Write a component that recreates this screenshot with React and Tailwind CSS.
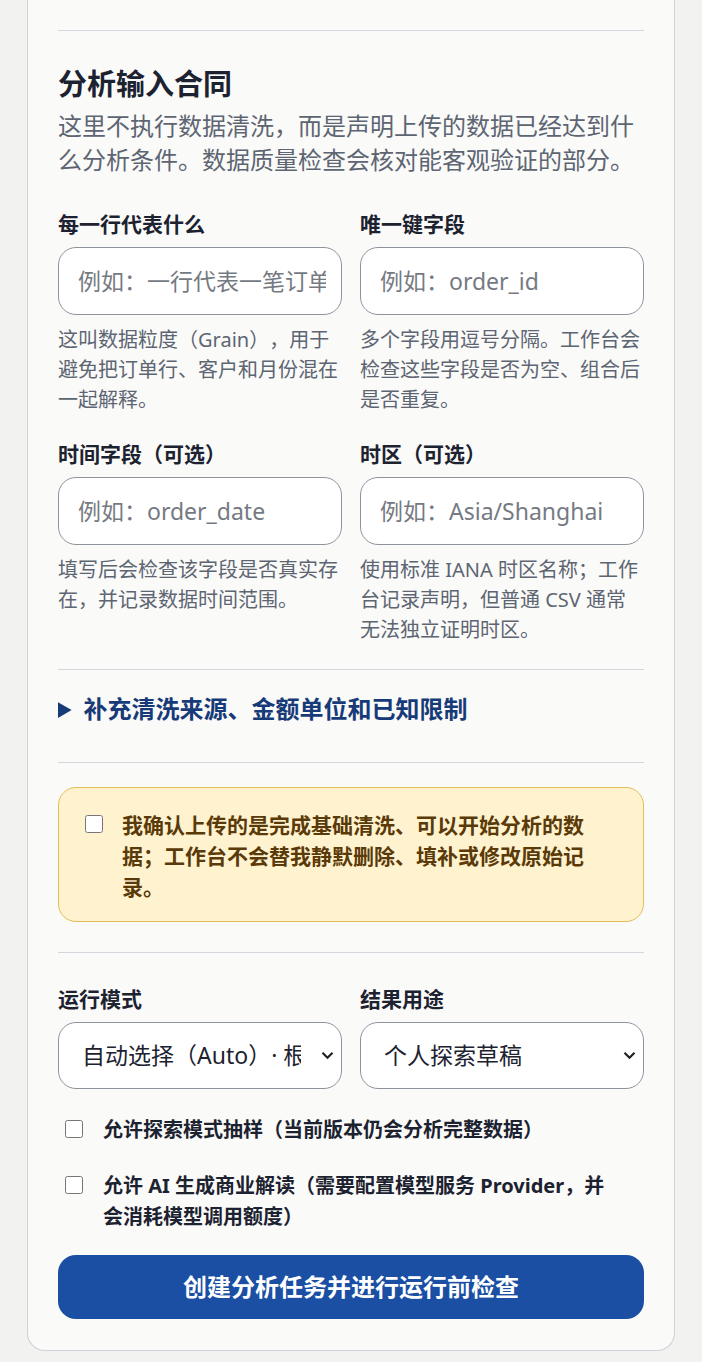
import React, { useState } from "react";

const font = { fontFamily: '"Noto Sans", "Noto Sans CJK SC", sans-serif' };

function Field({ label, placeholder, help }) {
  return (
    <div className="flex flex-col">
      <label className="text-[21px] font-bold leading-[28px] text-[#1c2230]">{label}</label>
      <input
        placeholder={placeholder}
        className="mt-[9px] h-[68px] w-full rounded-[18px] border border-[#8d939c] bg-white pl-[19px] pr-[15px] text-[23px] text-[#1c2230] placeholder:text-[#757a82] outline-none"
      />
      <p className="mt-[10px] text-[20px] leading-[30px] text-[#5d6573]">{help}</p>
    </div>
  );
}

function Select({ label, options }) {
  return (
    <div className="flex flex-col">
      <label className="text-[21px] font-bold leading-[28px] text-[#1c2230]">{label}</label>
      <div className="relative mt-[9px]">
        <select className="h-[67px] w-full appearance-none rounded-[18px] border border-[#8d939c] bg-white pl-[23px] pr-[40px] text-[23px] text-[#1c2230] outline-none">
          {options.map((o) => (
            <option key={o}>{o}</option>
          ))}
        </select>
        <svg
          className="pointer-events-none absolute right-[8px] top-[29px]"
          width="13"
          height="9"
          viewBox="0 0 13 9"
          fill="none"
        >
          <path d="M1.5 1.8 6.5 6.8 11.5 1.8" stroke="#1f2328" strokeWidth="2.2" />
        </svg>
      </div>
    </div>
  );
}

export default function App() {
  const [confirmed, setConfirmed] = useState(false);
  const [sampling, setSampling] = useState(false);
  const [ai, setAi] = useState(false);

  return (
    <div className="min-h-screen bg-[#f2f2f0] pb-[11px] [text-spacing-trim:space-all]" style={font}>
      <div className="mx-[27px] rounded-b-[18px] border-x border-b border-[#cfd2d7] bg-[#fafaf8] px-[30px] pb-[31px] pt-[30px]">
        <hr className="border-[#d3d6db]" />

        {/* Analysis input contract */}
        <h2 className="mt-[33px] text-[29px] font-bold leading-[40px] text-[#1c2230]">分析输入合同</h2>
        <p className="mt-[5px] text-[24px] leading-[34px] text-[#5d6573]">
          这里不执行数据清洗，而是声明上传的数据已经达到什么分析条件。数据质量检查会核对能客观验证的部分。
        </p>

        <div className="mt-[33px] grid grid-cols-2 gap-x-[18px] gap-y-[25px]">
          <Field
            label="每一行代表什么"
            placeholder="例如：一行代表一笔订单"
            help="这叫数据粒度（Grain），用于避免把订单行、客户和月份混在一起解释。"
          />
          <Field
            label="唯一键字段"
            placeholder="例如：order_id"
            help="多个字段用逗号分隔。工作台会检查这些字段是否为空、组合后是否重复。"
          />
          <Field
            label="时间字段（可选）"
            placeholder="例如：order_date"
            help="填写后会检查该字段是否真实存在，并记录数据时间范围。"
          />
          <Field
            label="时区（可选）"
            placeholder="例如：Asia/Shanghai"
            help="使用标准 IANA 时区名称；工作台记录声明，但普通 CSV 通常无法独立证明时区。"
          />
        </div>

        <hr className="mt-[24px] border-[#d3d6db]" />

        <details className="py-[22px]">
          <summary className="cursor-pointer text-[24px] font-bold leading-[34px] text-[#173a78]">
            补充清洗来源、金额单位和已知限制
          </summary>
        </details>

        <hr className="mt-[14px] border-[#d3d6db]" />

        {/* Confirmation */}
        <label className="mt-[24px] flex gap-[19px] rounded-[18px] border border-[#e3bd55] bg-[#fff2cf] pb-[18px] pl-[26px] pr-[40px] pt-[22px]">
          <input
            type="checkbox"
            checked={confirmed}
            onChange={(e) => setConfirmed(e.target.checked)}
            className="mt-[5px] h-[18px] w-[18px] shrink-0"
          />
          <span className="text-[21px] font-bold leading-[31px] text-[#5a3a08]">
            我确认上传的是完成基础清洗、可以开始分析的数据；工作台不会替我静默删除、填补或修改原始记录。
          </span>
        </label>

        <hr className="mt-[30px] border-[#d3d6db]" />

        {/* Run settings */}
        <div className="mt-[32px] grid grid-cols-2 gap-x-[18px]">
          <Select label="运行模式" options={["自动选择（Auto）· 根据数据规模决定", "完整分析"]} />
          <Select label="结果用途" options={["个人探索草稿", "团队内部分享"]} />
        </div>

        <label className="mt-[25px] flex gap-[20px] pl-[7px] pr-[30px]">
          <input
            type="checkbox"
            checked={sampling}
            onChange={(e) => setSampling(e.target.checked)}
            className="mt-[6px] h-[18px] w-[18px] shrink-0"
          />
          <span className="text-[20px] font-bold leading-[31px] text-[#1c2230]">
            允许探索模式抽样（当前版本仍会分析完整数据）
          </span>
        </label>

        <label className="mt-[25px] flex gap-[20px] pl-[7px] pr-[30px]">
          <input
            type="checkbox"
            checked={ai}
            onChange={(e) => setAi(e.target.checked)}
            className="mt-[6px] h-[18px] w-[18px] shrink-0"
          />
          <span className="text-[20px] font-bold leading-[31px] text-[#1c2230]">
            允许 AI 生成商业解读（需要配置模型服务 Provider，并会消耗模型调用额度）
          </span>
        </label>

        <button className="mt-[23px] h-[64px] w-full rounded-[18px] bg-[#1a4fa3] text-[24px] font-bold text-white">
          创建分析任务并进行运行前检查
        </button>
      </div>
    </div>
  );
}
